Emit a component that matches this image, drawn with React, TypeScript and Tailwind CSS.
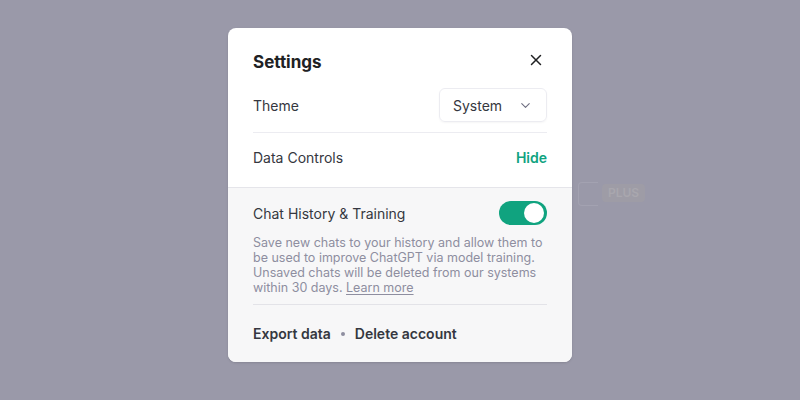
import { X, ChevronDown } from "lucide-react";

export default function App() {
  return (
    <div
      className="relative w-[800px] h-[400px] bg-[#9a99a9] overflow-hidden"
      style={{ fontFamily: "Inter, 'Noto Sans', sans-serif" }}
    >
      {/* faint content behind the overlay */}
      <div className="absolute left-[578px] top-[182px] w-[20px] h-[24px] border border-[#a3a2b1] border-r-0 rounded-l" />
      <div className="absolute left-[602px] top-[184px] px-1.5 h-[18px] rounded bg-[#9e9ca6] text-[#a9a7ae] text-[12px] font-semibold leading-[18px]">
        PLUS
      </div>

      <div className="absolute left-[228px] top-[28px] w-[344px] h-[334px] rounded-lg bg-white overflow-hidden flex flex-col shadow-sm">
        <div className="px-[25px] pt-[23px]">
          <div className="flex items-center justify-between h-[24px]">
            <h2 className="text-[17px] font-bold text-[#202123]">Settings</h2>
            <X className="w-[18px] h-[18px] text-[#202123] -mt-1.5 mr-[2px]" strokeWidth={2} />
          </div>
          <div className="flex items-center justify-between mt-[13px] pb-[10px] border-b border-[#ececf1]">
            <span className="text-[14px] text-[#353740]">Theme</span>
            <div className="flex items-center justify-between w-[108px] h-[34px] px-[13px] border border-[#ececf1] rounded-md text-[14px] text-[#353740] shadow-[0_1px_2px_rgba(0,0,0,0.04)]">
              <span>System</span>
              <ChevronDown className="w-[15px] h-[15px] text-[#6e6e80]" strokeWidth={1.75} />
            </div>
          </div>
          <div className="flex items-center justify-between h-[48px] mb-[6px]">
            <span className="text-[14px] text-[#353740]">Data Controls</span>
            <span className="text-[14px] font-semibold text-[#10a37f]">Hide</span>
          </div>
        </div>

        <div className="flex-1 bg-[#f7f7f8] border-t border-[#e5e5ea] px-[25px] pt-[13px]">
          <div className="flex items-center justify-between h-[24px]">
            <span className="text-[14px] text-[#353740]">Chat History &amp; Training</span>
            <div className="w-[48px] h-[24px] rounded-full bg-[#10a37f] flex items-center justify-end pr-[3px]">
              <div className="w-[20px] h-[20px] rounded-full bg-white" />
            </div>
          </div>
          <div className="mt-[10px] text-[12.5px] leading-[15px] text-[#8e8ea0]">
            Save new chats to your history and allow them to be used to improve ChatGPT via model training. Unsaved chats will be deleted from our systems within 30 days.{" "}
            <a className="underline underline-offset-2">Learn more</a>
          </div>
          <div className="mt-[9px] border-t border-[#e3e3e8]" />
          <div className="flex items-center gap-[10px] mt-[18px] text-[14px] font-semibold text-[#353740]">
            <span>Export data</span>
            <span className="w-[4px] h-[4px] rounded-full bg-[#8e8ea0]" />
            <span>Delete account</span>
          </div>
        </div>
      </div>
    </div>
  );
}
